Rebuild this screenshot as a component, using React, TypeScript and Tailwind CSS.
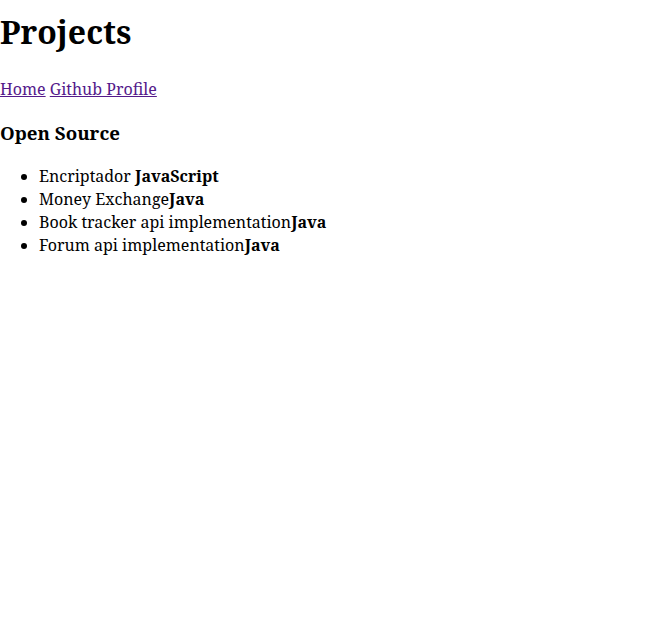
export default function App() {
  const projects = [
    { name: "Encriptador ", lang: "JavaScript" },
    { name: "Money Exchange", lang: "Java" },
    { name: "Book tracker api implementation", lang: "Java" },
    { name: "Forum api implementation", lang: "Java" },
  ];

  return (
    <div className="bg-white text-black font-['Noto_Serif',serif] font-stretch-normal text-[16px] min-h-[640px]">
      <h1 className="mt-[8px] text-[32px] font-bold leading-[48px]">Projects</h1>
      <nav className="mt-[21px] leading-[24px]">
        <a href="#" className="text-[#551a8b] underline">Home</a>{" "}
        <a href="#" className="text-[#551a8b] underline">Github Profile</a>
      </nav>
      <h3 className="mt-[18px] text-[18.72px] font-bold leading-[28px]">Open Source</h3>
      <ul className="mt-[18px] list-disc pl-[39px] leading-[23px]">
        {projects.map((p) => (
          <li key={p.name}>
            {p.name}
            <b>{p.lang}</b>
          </li>
        ))}
      </ul>
    </div>
  );
}
